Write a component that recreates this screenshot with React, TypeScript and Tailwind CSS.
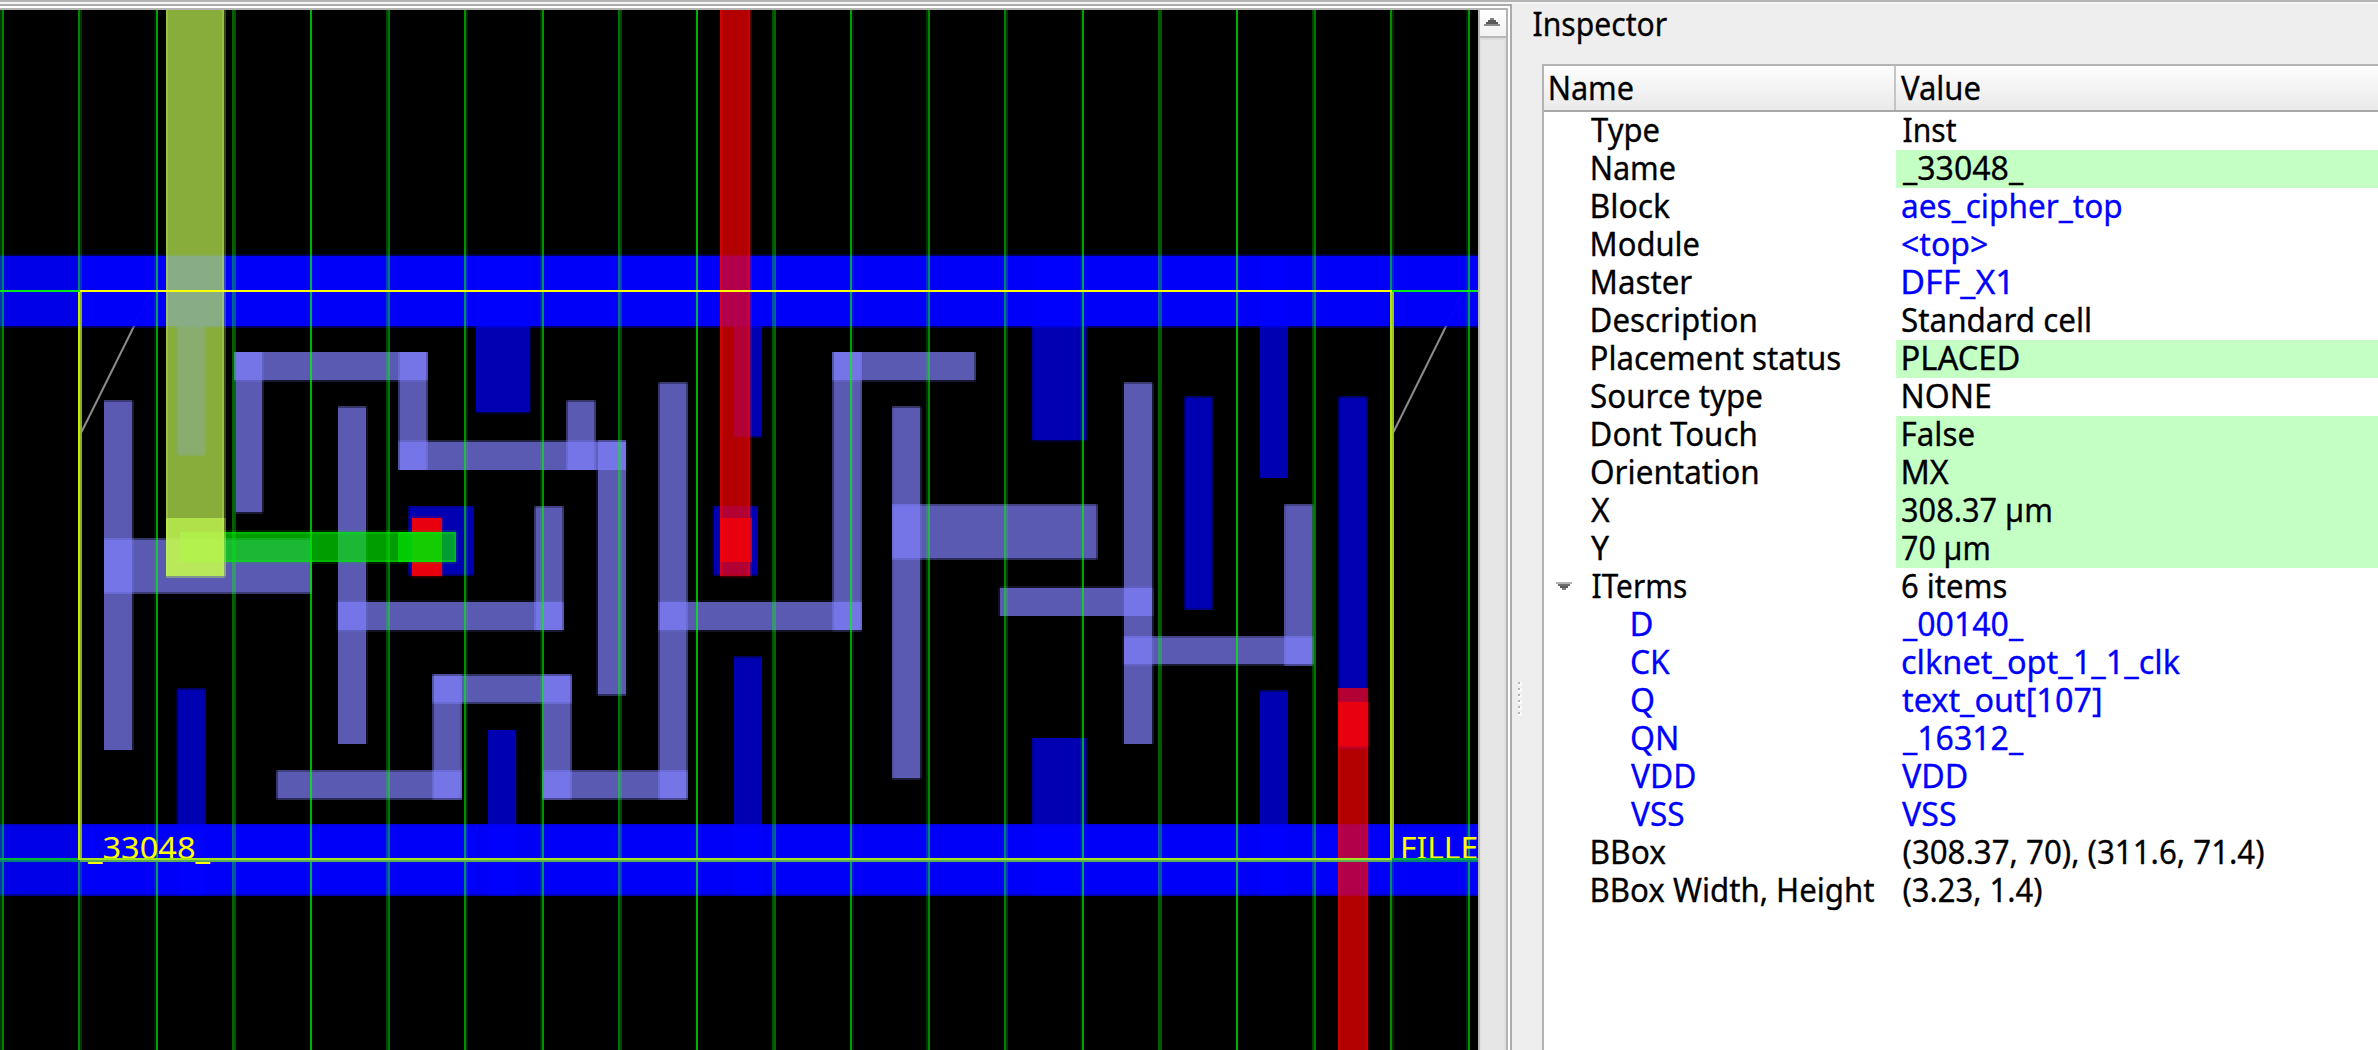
import { useLayoutEffect, useState } from 'react';

type Box = [number, number, number, number];

const FONT = '"Noto Sans", "Open Sans", sans-serif';

/* ---------- layout canvas data: [left, top, right, bottom] ---------- */

const RAILS: Box[] = [
  [0, 255.7, 1478, 326.4],
  [0, 824.5, 1478, 895],
  [0, 255.7, 1478, 326.4],
  [0, 824.5, 1478, 895],
  [80, 255.7, 1478, 326.4],
  [80, 824.5, 1478, 895],
];

const METAL: Box[] = [
  [177.3, 256, 205.6, 455.3],
  [476, 256, 530.5, 412.6],
  [734, 256, 762, 437],
  [1032.3, 256, 1087, 440.6],
  [1260, 256, 1288, 478],
  [1184.8, 396.8, 1213, 609.5],
  [1338.8, 396.8, 1367.5, 749],
  [177.3, 688.8, 205.7, 895],
  [488, 730, 516.4, 895],
  [734, 656.8, 762, 895],
  [1032.3, 738, 1087, 895],
  [1260, 690.8, 1288, 895],
  [408.7, 506.3, 474, 575.3],
  [713.6, 506.3, 758, 575.3],
];

const OBSTRUCTIONS: Box[] = [
  [104, 400.7, 132.6, 750],
  [104, 538.8, 311.5, 593.3],
  [234, 352, 427.3, 380.5],
  [235.6, 352, 262.6, 512.6],
  [398.8, 352, 427.3, 470],
  [398.8, 441.2, 626, 470],
  [566.8, 400.8, 595.3, 470],
  [597.6, 440.7, 626.2, 695],
  [338, 406.8, 366.4, 744],
  [337.7, 601.7, 563.3, 630.4],
  [534.8, 506.5, 563.3, 630.2],
  [276.8, 770.6, 461.7, 799],
  [432.8, 674.9, 461.7, 799],
  [432.8, 674.9, 571.3, 703.2],
  [542.8, 674.9, 571.3, 799],
  [542.8, 770.6, 687.3, 799],
  [658.8, 382.7, 687.3, 799],
  [658.8, 601.7, 861.7, 630.4],
  [832.8, 352, 861.7, 630.4],
  [832.8, 352, 975.3, 380.5],
  [892.2, 406.8, 920.6, 778.6],
  [892.2, 504.5, 1097.2, 559],
  [999.6, 587.6, 1152.5, 616],
  [1123.8, 382.7, 1152.5, 744],
  [1123.8, 636.5, 1313, 664.6],
  [1284.3, 504.5, 1313, 665.3],
];

const TRACKS: Box[] = Array.from({ length: 20 }, (_, k): Box => {
  const c = 2.4 + 77.17 * k;
  return [Math.max(0, c - 1), 10, c + 1, 1050];
});

const RED: Box[] = [
  [412, 517.5, 442.4, 576.5],
  [412, 518, 442, 576],
  [720.5, 10, 750.8, 576.5],
  [720, 518, 752, 562],
  [720, 10, 722, 576],
  [1338, 688, 1368.4, 1050],
  [1338, 702, 1368.6, 747],
];

const GREEN: Box[] = [
  [180, 531.6, 456.4, 562.4],
  [398, 532, 442, 562],
];

const OLIVE: Box[] = [
  [166, 10, 224.8, 576.6],
  [166, 518, 224.8, 576.6],
];

/* Splits a span on the 2px device grid into [start, end, coverage] pieces. */
function pieces(a: number, b: number): [number, number, number][] {
  const a0 = Math.floor(a / 2) * 2;
  const b0 = Math.floor(b / 2) * 2;
  if (a0 === b0) return [[a0, a0 + 2, (b - a) / 2]];
  const out: [number, number, number][] = [];
  let start = a0;
  if (a > a0) {
    out.push([a0, a0 + 2, (a0 + 2 - a) / 2]);
    start = a0 + 2;
  }
  if (b0 > start) out.push([start, b0, 1]);
  if (b > b0) out.push([b0, b0 + 2, (b - b0) / 2]);
  return out;
}

function Shapes({ boxes, fill, alpha = 0.7 }: { boxes: Box[]; fill: string; alpha?: number }) {
  return (
    <g fill={fill} shapeRendering="crispEdges">
      {boxes.map(([l, t, r, b], i) =>
        pieces(l, r).map(([xa, xb, cx]) =>
          pieces(t, b).map(([ya, yb, cy]) => (
            <rect
              key={`${i}-${xa}-${ya}`}
              x={xa}
              y={ya}
              width={xb - xa}
              height={yb - ya}
              fillOpacity={alpha * cx * cy}
            />
          )),
        ),
      )}
    </g>
  );
}

function LayoutCanvas() {
  return (
    <svg className="block h-[1040px] w-[1478px] bg-black" viewBox="0 10 1478 1040">
      <g stroke="#8c8c8c" strokeWidth="2">
        <path d="M81.5 432 151 292" />
        <path d="M1393.5 432 1463 292" />
      </g>
      <Shapes boxes={RAILS} fill="#0000ff" />
      <Shapes boxes={METAL} fill="#0000ff" />
      <Shapes boxes={OBSTRUCTIONS} fill="#8080ff" />
      <Shapes boxes={TRACKS} fill="#00ff00" alpha={0.72} />
      <Shapes boxes={RED} fill="#ff0000" />
      <Shapes boxes={GREEN} fill="#00df00" />
      <g fill="#00ff00" fillOpacity="0.25" shapeRendering="crispEdges">
        <rect x="226" y="532" width="230" height="2" />
        <rect x="226" y="560" width="230" height="2" />
        <rect x="454" y="534" width="2" height="26" />
      </g>
      <Shapes boxes={OLIVE} fill="#c2f653" />
      <g fill="#c2f653" fillOpacity="0.3" shapeRendering="crispEdges">
        <rect x="166" y="10" width="2" height="566" />
        <rect x="222" y="10" width="2" height="566" />
      </g>
      <g fill="#ff0000" fillOpacity="0.3" shapeRendering="crispEdges">
        <rect x="748" y="10" width="2" height="566" />
        <rect x="1338" y="748" width="2" height="302" />
        <rect x="1366" y="748" width="2" height="302" />
      </g>
      <g fill="#ffff00" fontFamily={FONT} fontSize="31.5">
        <text x="88" y="859" textLength="122" lengthAdjust="spacingAndGlyphs">_33048_</text>
        <text x="1400" y="859" textLength="78" lengthAdjust="spacingAndGlyphs">FILLE</text>
      </g>
      <g shapeRendering="crispEdges">
        <rect x="0" y="290" width="80" height="2" fill="#00e81c" />
        <rect x="1392" y="290" width="86" height="2" fill="#00e81c" />
        <rect x="80" y="290" width="1312" height="2" fill="#ffff00" />
        <rect x="0" y="858" width="80" height="2" fill="#00b43c" />
        <rect x="0" y="860" width="80" height="2" fill="#008278" />
        <rect x="1392" y="858" width="86" height="2" fill="#00b43c" />
        <rect x="1392" y="860" width="86" height="2" fill="#008278" />
        <rect x="80" y="858" width="1312" height="2" fill="#a0e61a" />
        <rect x="80" y="860" width="1312" height="2" fill="#5cac58" />
        <rect x="78" y="292" width="2" height="568" fill="#c3ec00" />
        <rect x="80" y="292" width="2" height="566" fill="#8cac2c" />
        <rect x="1390" y="292" width="2" height="568" fill="#b2e010" />
        <rect x="1392" y="292" width="2" height="566" fill="#98c41c" />
      </g>
    </svg>
  );
}

/* ---------- inspector ---------- */

/* Text whose drawn glyphs start at the left edge and span `width` pixels;
   glyphs that open with an upright stem sit slightly further in. */
function Fit({ text, width }: { text: string; width: number }) {
  const [transform, setTransform] = useState('none');
  useLayoutEffect(() => {
    const ctx = document.createElement('canvas').getContext('2d');
    if (!ctx) return;
    ctx.font = `32px ${FONT}`;
    const m = ctx.measureText(text);
    const inset = /^[BDEFIKLMNP(]/.test(text) ? 1.5 : 0;
    const s = (width - inset) / (m.actualBoundingBoxRight + m.actualBoundingBoxLeft);
    setTransform(`translateX(${m.actualBoundingBoxLeft * s + inset}px) scaleX(${s})`);
  }, [text, width]);
  return (
    <span className="inline-block origin-left whitespace-pre [-webkit-text-stroke:0.3px]" style={{ transform }}>
      {text}
    </span>
  );
}

type Row = {
  name: string;
  nw: number;
  value: string;
  vw: number;
  link?: boolean;
  editable?: boolean;
  child?: boolean;
  open?: boolean;
};

const ROWS: Row[] = [
  { name: 'Type', nw: 68, value: 'Inst', vw: 54 },
  { name: 'Name', nw: 84, value: '_33048_', vw: 122, editable: true },
  { name: 'Block', nw: 79, value: 'aes_cipher_top', vw: 219, link: true },
  { name: 'Module', nw: 108, value: '<top>', vw: 85, link: true },
  { name: 'Master', nw: 101, value: 'DFF_X1', vw: 106, link: true },
  { name: 'Description', nw: 165, value: 'Standard cell', vw: 188 },
  { name: 'Placement status', nw: 249, value: 'PLACED', vw: 117, editable: true },
  { name: 'Source type', nw: 171, value: 'NONE', vw: 88 },
  { name: 'Dont Touch', nw: 165, value: 'False', vw: 72, editable: true },
  { name: 'Orientation', nw: 167, value: 'MX', vw: 47, editable: true },
  { name: 'X', nw: 19, value: '308.37 µm', vw: 149, editable: true },
  { name: 'Y', nw: 19, value: '70 µm', vw: 87, editable: true },
  { name: 'ITerms', nw: 95, value: '6 items', vw: 104, open: true },
  { name: 'D', nw: 21, value: '_00140_', vw: 122, link: true, child: true },
  { name: 'CK', nw: 39, value: 'clknet_opt_1_1_clk', vw: 278, link: true, child: true },
  { name: 'Q', nw: 23, value: 'text_out[107]', vw: 198, link: true, child: true },
  { name: 'QN', nw: 46, value: '_16312_', vw: 122, link: true, child: true },
  { name: 'VDD', nw: 64, value: 'VDD', vw: 65, link: true, child: true },
  { name: 'VSS', nw: 53, value: 'VSS', vw: 54, link: true, child: true },
  { name: 'BBox', nw: 75, value: '(308.37, 70), (311.6, 71.4)', vw: 362 },
  { name: 'BBox Width, Height', nw: 283, value: '(3.23, 1.4)', vw: 140 },
];

function PropertyRow({ row }: { row: Row }) {
  return (
    <div className="flex h-[38px] leading-[36px]">
      <div className={row.child ? 'flex w-[352px] text-[#0000ff]' : 'flex w-[352px]'}>
        <div className={row.child ? 'w-[87px] shrink-0' : 'w-[47px] shrink-0'}>
          {row.open && (
            <svg className="mt-[14px] ml-[12px] block h-2 w-4" viewBox="0 0 16 8" shapeRendering="crispEdges">
              <path d="M0 0h16v2H0z" fill="#b4b4b4" />
              <path d="M2 2h12v2H2z" fill="#6e6e6e" />
              <path d="M4 4h8v2H4z" fill="#5a5a5a" />
              <path d="M6 6h4v2H6z" fill="#808080" />
            </svg>
          )}
        </div>
        <Fit text={row.name} width={row.nw} />
      </div>
      <div
        className={
          row.editable
            ? 'grow bg-[#c4ffc4] pl-[6px]'
            : row.link
              ? 'grow pl-[6px] text-[#0000ff]'
              : 'grow pl-[6px]'
        }
      >
        <Fit text={row.value} width={row.vw} />
      </div>
    </div>
  );
}

function ScrollBar() {
  return (
    <div className="flex h-[1040px] w-7 flex-col border-l-2 border-[#b8b8b8] bg-[#e6e6e6]">
      <div className="flex h-7 justify-center border-b-2 border-[#b8b8b8] bg-linear-to-b from-white to-[#f2f2f2] pt-2">
        <svg className="mr-[2px] block h-2 w-4" viewBox="0 0 16 8" shapeRendering="crispEdges">
          <path d="M6 0h4v2H6z" fill="#808080" />
          <path d="M4 2h8v2H4z" fill="#5a5a5a" />
          <path d="M2 4h12v2H2z" fill="#5a5a5a" />
          <path d="M0 6h16v2H0z" fill="#8c8c8c" />
        </svg>
      </div>
      <div className="grow border-t-2 border-r-2 border-l-2 border-[#dcdcdc] border-r-[#e0e0e0] border-l-[#e2e2e2]" />
    </div>
  );
}

function SplitterGrip() {
  return (
    <div className="flex w-[30px] flex-col gap-[2px] pt-[678px] pl-[6px]">
      {[0, 1, 2, 3, 4, 5].map((i) => (
        <div key={i} className="size-1 bg-[#fafafa]">
          <div className="size-[2px] bg-[#b4b4b4]" />
        </div>
      ))}
    </div>
  );
}

export default function App() {
  return (
    <div className="flex h-[1050px] w-[2378px] flex-col overflow-hidden bg-[#eeeeee] font-['Noto_Sans','Open_Sans',sans-serif] text-[32px] text-black">
      <div className="h-1 shrink-0 border-t-2 border-[#b4b4b4] bg-[#f6f6f6]" />
      <div className="flex grow">
        <div className="h-[1046px] w-[1512px] shrink-0 border-t-2 border-r-2 border-[#acacac]">
          <div className="border-t-2 border-r-2 border-white">
            <div className="flex border-t-2 border-r-2 border-[#b4b4b4]">
              <LayoutCanvas />
              <ScrollBar />
            </div>
          </div>
        </div>
        <div className="flex grow">
          <SplitterGrip />
          <div className="flex grow flex-col">
            <div className="-ml-[10px] h-[60px] leading-[40px]">
              <Fit text="Inspector" width={135} />
            </div>
            <div className="flex grow flex-col border-t-2 border-l-2 border-[#b4b4b4] bg-white">
              <div className="flex h-[46px] border-b-2 border-[#a8a8a8] bg-linear-to-b from-[#fdfdfd] to-[#eaeaea] leading-[44px]">
                <div className="w-[352px] border-r-2 border-[#c4c4c4] pl-[5px]">
                  <Fit text="Name" width={84} />
                </div>
                <div className="pl-[5px]">
                  <Fit text="Value" width={79} />
                </div>
              </div>
              {ROWS.map((row, i) => (
                <PropertyRow key={i} row={row} />
              ))}
            </div>
          </div>
        </div>
      </div>
    </div>
  );
}
